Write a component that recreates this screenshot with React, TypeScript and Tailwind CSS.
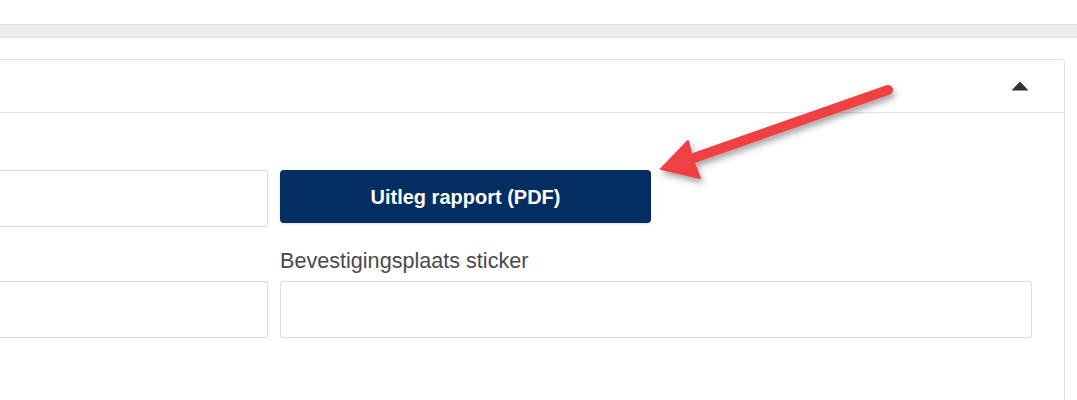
import React from 'react';

const Field: React.FC<{ label?: string; children: React.ReactNode }> = ({ label, children }) => (
  <div className="flex flex-col">
    <label className="mb-[8px] h-[24px] whitespace-nowrap text-[21.6px] leading-[24px] text-[#4a4a4a]">{label}</label>
    {children}
  </div>
);

const TextInput = () => (
  <input
    type="text"
    className="h-[57px] w-full rounded-[2px] border border-[#dcdcdc] bg-white px-3 outline-none"
  />
);

// Red call-out arrow drawn over the form
const Arrow = () => (
  <svg className="pointer-events-none absolute left-0 top-0" width="1077" height="400">
    <defs>
      <filter id="arrowShadow" x="-20%" y="-50%" width="140%" height="200%">
        <feDropShadow dx="2" dy="4" stdDeviation="3" floodColor="#000" floodOpacity="0.35" />
      </filter>
    </defs>
    <g filter="url(#arrowShadow)" fill="#ef3f42" stroke="#ef3f42">
      <line x1="888" y1="90" x2="688" y2="160" strokeWidth="10" strokeLinecap="round" />
      <polygon points="661,169 688,141 692,158 700,178" strokeWidth="2" strokeLinejoin="round" />
    </g>
  </svg>
);

export default function App() {
  return (
    <div
      className="relative h-[400px] w-[1077px] overflow-hidden bg-white"
      style={{ fontFamily: '"Liberation Sans", Arial, sans-serif' }}
    >
      <div className="h-[24px]" />
      <div className="h-[14px] border-y border-[#dfdfdf] bg-[#ececec]" />
      <div className="h-[21px]" />

      <div className="-ml-[517px] mr-[12px] h-[400px] rounded-[4px] border border-[#e2e2e2] bg-white">
        <div className="flex h-[53px] items-center justify-end border-b border-[#e2e2e2] pr-[35px]">
          <svg width="18" height="10" viewBox="0 0 18 10">
            <polygon points="9,0.5 17.5,9.5 0.5,9.5" fill="#333" />
          </svg>
        </div>

        <div className="grid grid-cols-[752px_752px] gap-x-[12px] gap-y-[22px] pl-[32px] pr-[32px] pt-[25px]">
          <Field>
            <TextInput />
          </Field>
          <Field>
            <button className="h-[53px] w-[371px] rounded-[4px] bg-[#042d61] text-[20px] font-bold text-white shadow-sm">
              Uitleg rapport (PDF)
            </button>
          </Field>
          <Field>
            <TextInput />
          </Field>
          <Field label="Bevestigingsplaats sticker">
            <TextInput />
          </Field>
        </div>
      </div>

      <Arrow />
    </div>
  );
}
